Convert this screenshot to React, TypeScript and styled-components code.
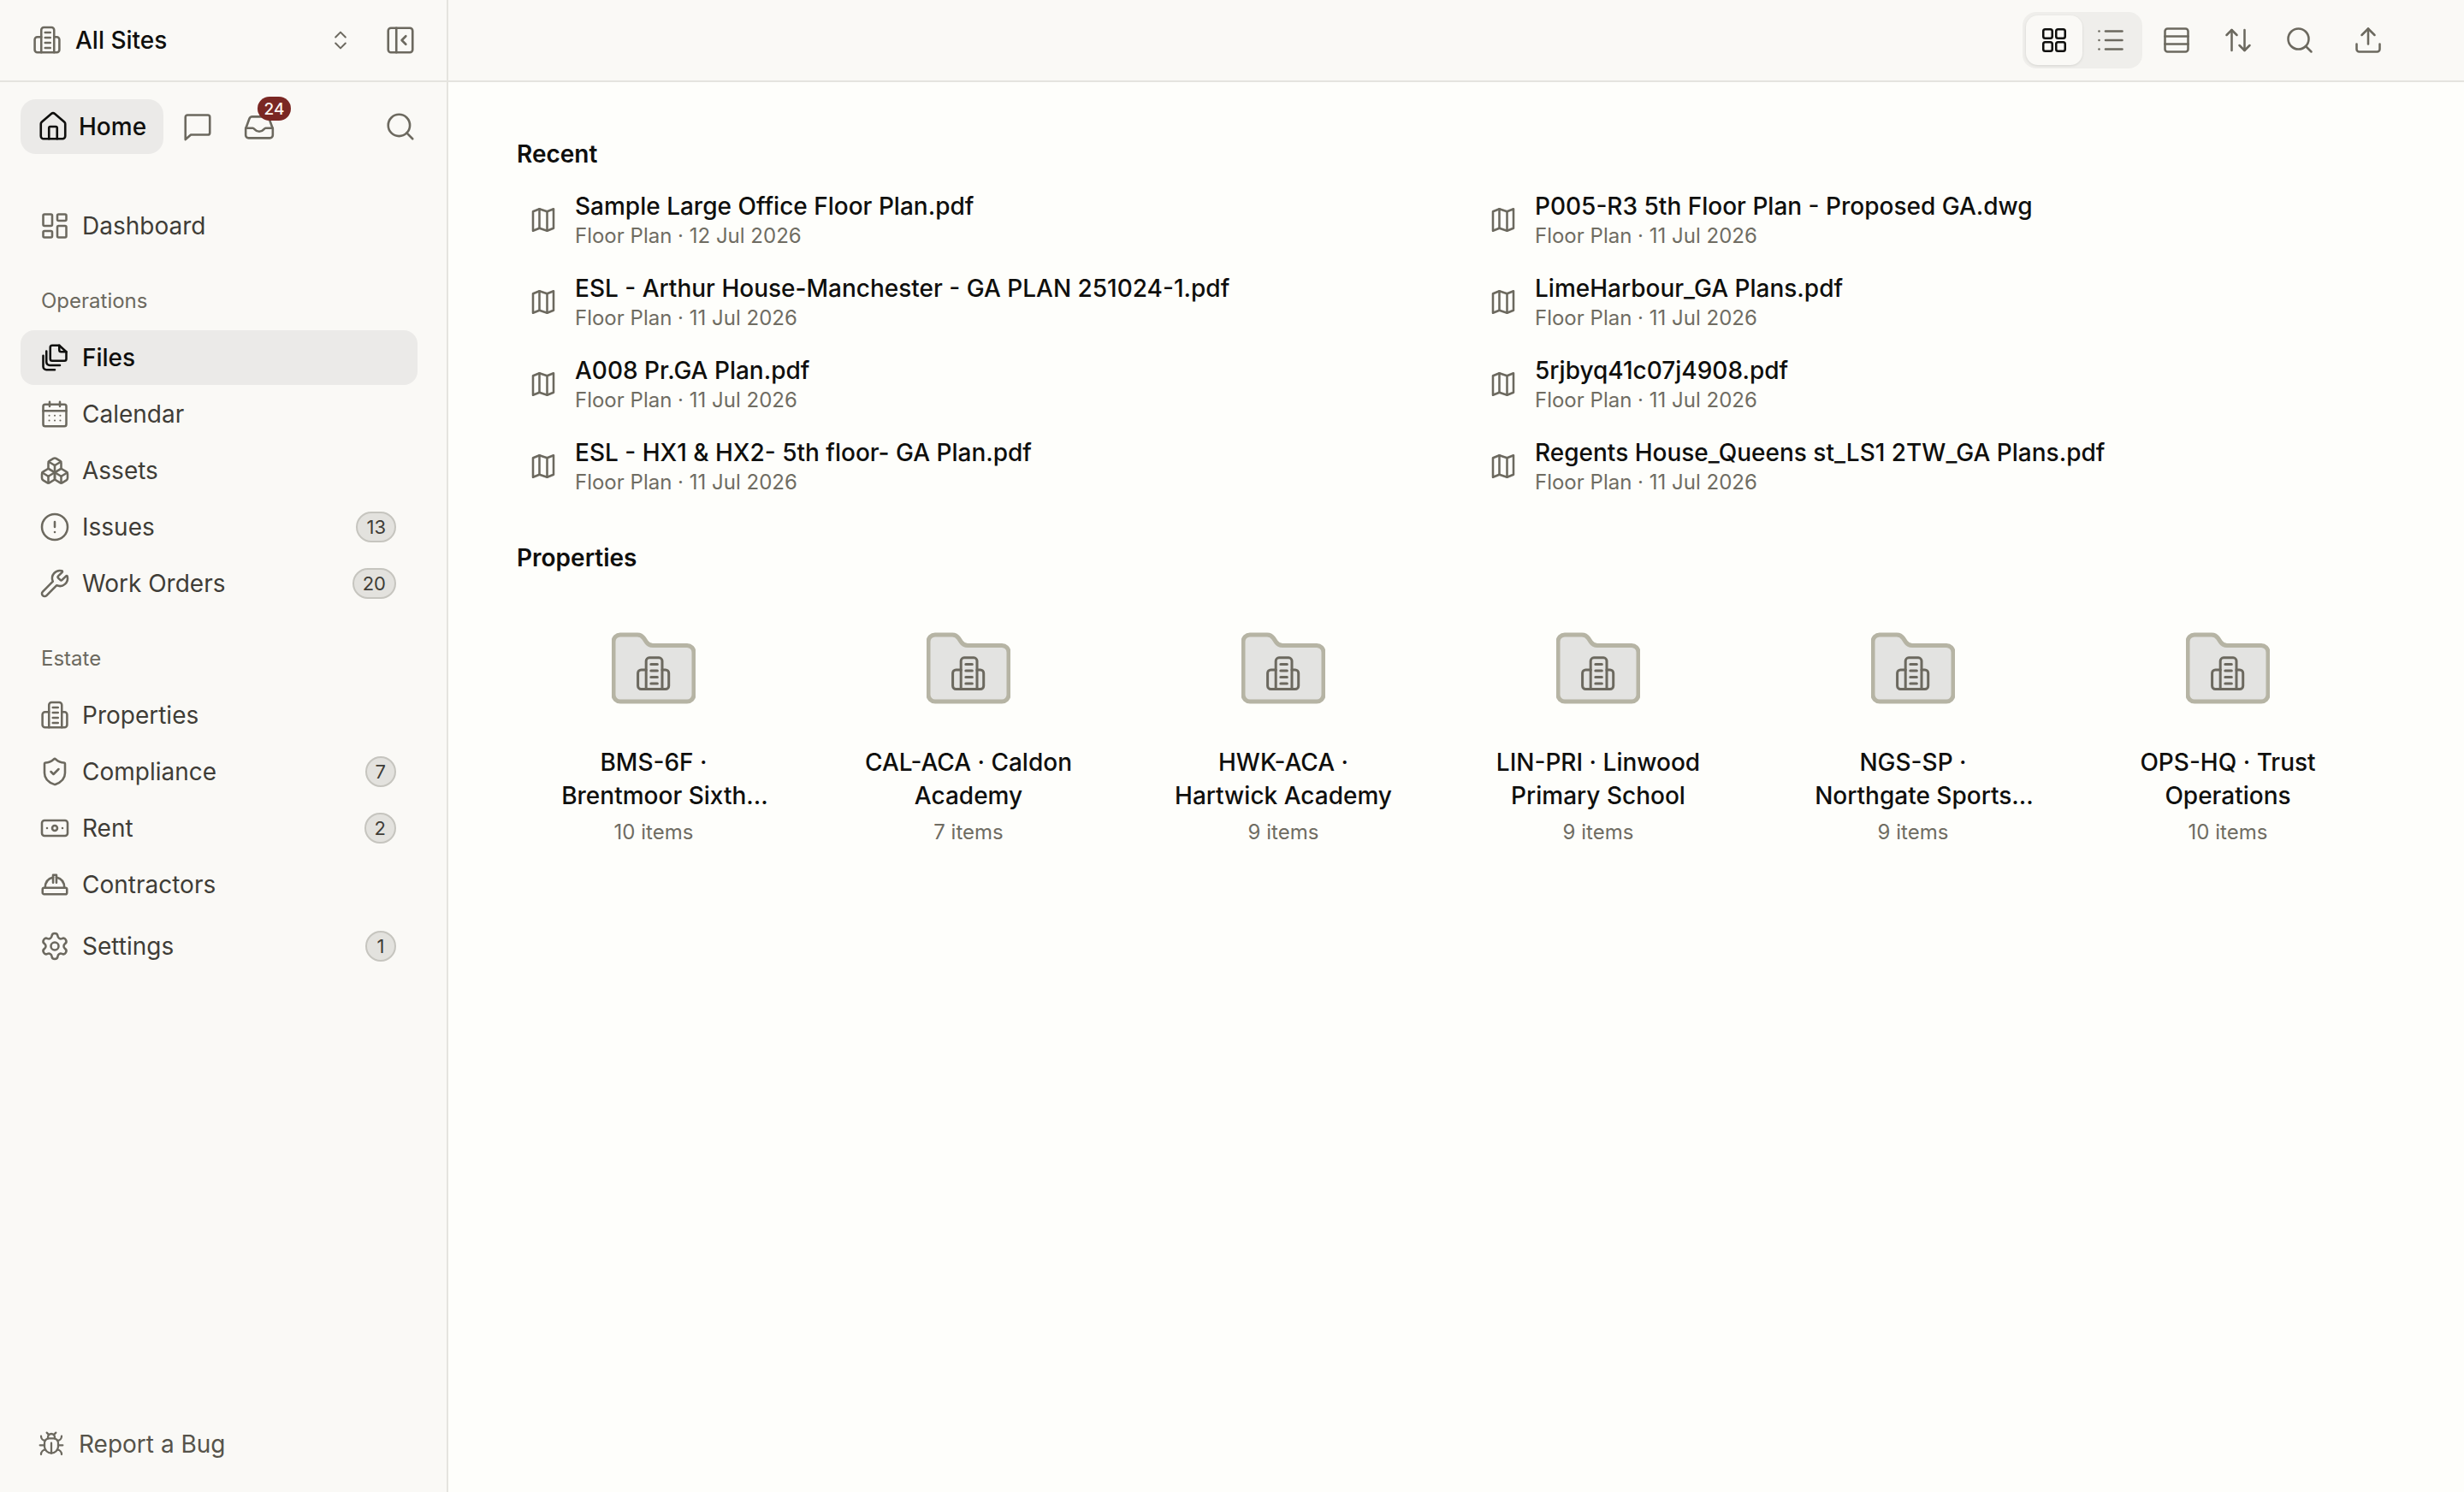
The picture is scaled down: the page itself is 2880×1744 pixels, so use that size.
import React from 'react';
import styled, { createGlobalStyle } from 'styled-components';
import {
  ArrowUpDown,
  Banknote,
  Boxes,
  Bug,
  ChevronsUpDown,
  CircleAlert,
  House,
  LayoutDashboard,
  List,
  PanelLeftClose,
  Rows3,
  Search,
  Settings,
  ShieldCheck,
  Upload,
  Wrench,
} from 'lucide-react';

const GlobalStyle = createGlobalStyle`
  html, body {
    margin: 0;
    height: 100%;
    background: #fefefb;
  }
  body {
    font-family: Inter, "Liberation Sans", sans-serif;
    color: #0f0f0d;
    overflow: hidden;
  }
  #root { height: 100%; }
`;

// Drawn icons
type GlyphProps = { size?: number; strokeWidth?: number; color?: string };

const Glyph: React.FC<GlyphProps & { children: React.ReactNode }> = ({
  size = 36,
  strokeWidth = 1.7,
  color = 'currentColor',
  children,
}) => (
  <svg
    width={size}
    height={size}
    viewBox="0 0 24 24"
    fill="none"
    stroke={color}
    strokeWidth={strokeWidth}
    strokeLinecap="round"
    strokeLinejoin="round"
  >
    {children}
  </svg>
);

const BuildingPaths: React.FC = () => (
  <>
    <path d="M7.500 21.500V4a2 2 0 0 1 2-2h6a2 2 0 0 1 2 2v17.500" />
    <path d="M7.500 9.500H4.400a2 2 0 0 0-2 2v8a2 2 0 0 0 2 2h15.200a2 2 0 0 0 2-2v-8a2 2 0 0 0-2-2h-2.100" />
    <path d="M10.500 6h4M10.500 10h4M10.500 14h4M10.500 18h4" />
  </>
);

const BuildingIcon: React.FC<GlyphProps> = (p) => (
  <Glyph {...p}>
    <BuildingPaths />
  </Glyph>
);

const MessageIcon: React.FC<GlyphProps> = (p) => (
  <Glyph {...p}>
    <path d="M3 21.500V5a1.500 1.500 0 0 1 1.500-1.500h15A1.500 1.500 0 0 1 21 5v11.500a1.500 1.500 0 0 1-1.500 1.500H7z" />
  </Glyph>
);

const InboxIcon: React.FC<GlyphProps> = (p) => (
  <Glyph {...p}>
    <path d="M2.500 13.500 5 6.600A2.400 2.400 0 0 1 7.200 5h9.600A2.400 2.400 0 0 1 19 6.600l2.500 6.900V18a2 2 0 0 1-2 2h-15a2 2 0 0 1-2-2z" />
    <path d="M2.500 13h5c1.300 0 1.400 2.400 4.500 2.400s3.200-2.400 4.500-2.400h5" />
  </Glyph>
);

const FilesIcon: React.FC<GlyphProps> = (p) => (
  <Glyph {...p}>
    <path d="M10 14.500a1.500 1.500 0 0 1-1.500-1.500V4a1.500 1.500 0 0 1 1.500-1.500h5.500L21 7.500V13a1.500 1.500 0 0 1-1.500 1.500z" />
    <path d="M15.500 2.500V6a1.500 1.500 0 0 0 1.500 1.500h4" />
    <path d="M5.500 7v8.500A2.500 2.500 0 0 0 8 18h8" />
    <path d="M3 10.500V19a2.500 2.500 0 0 0 2.500 2.500H12" />
  </Glyph>
);

const CalendarIcon: React.FC<GlyphProps> = (p) => (
  <Glyph {...p}>
    <rect x="3" y="4.500" width="18" height="17" rx="1.500" />
    <path d="M3 9.500h18M8 2.500v3.500M16 2.500v3.500" />
    <path d="M7.700 13.200h.01M12 13.200h.01M16.300 13.200h.01M7.700 17h.01M12 17h.01M16.300 17h.01" strokeWidth="1.400" />
  </Glyph>
);

const HardHatIcon: React.FC<GlyphProps> = (p) => (
  <Glyph {...p}>
    <rect x="2.500" y="14.500" width="19" height="5" rx="1.200" />
    <path d="M4.500 14.500c0-4.300 2.300-7.300 6.200-8.200M19.500 14.500c0-4.300-2.300-7.300-6.200-8.200" />
    <path d="M10.700 10.500V4.500h2.600v6" />
  </Glyph>
);

const GridIcon: React.FC<GlyphProps> = (p) => (
  <Glyph {...p}>
    <rect x="3.500" y="3.500" width="7" height="7" rx="1.500" />
    <rect x="13.500" y="3.500" width="7" height="7" rx="1.500" />
    <rect x="3.500" y="13.500" width="7" height="7" rx="1.500" />
    <rect x="13.500" y="13.500" width="7" height="7" rx="1.500" />
  </Glyph>
);

const PlanIcon: React.FC<GlyphProps> = (p) => (
  <Glyph {...p}>
    <path d="M4 5.500 9 3.500l6 2 5-2v15l-5 2-6-2-5 2z" />
    <path d="M9 3.500v15M15 5.500v15" />
  </Glyph>
);

const FolderGlyph: React.FC = () => (
  <FolderSvg viewBox="0 0 98 84">
    <path
      d="M10 3h20a9 9 0 0 1 7.500 4l3 4.500a9 9 0 0 0 7.500 4h40a8 8 0 0 1 8 8V73a8 8 0 0 1-8 8H10a8 8 0 0 1-8-8V11a8 8 0 0 1 8-8z"
      fill="#e3e3e1"
      stroke="#b6b4a4"
      strokeWidth="5"
    />
    <g transform="translate(26.100 26.100) scale(1.880)" fill="none" stroke="#6c695f" strokeWidth="1.600" strokeLinecap="round" strokeLinejoin="round">
      <BuildingPaths />
    </g>
  </FolderSvg>
);

// Layout
const Shell = styled.div`
  display: grid;
  grid-template-columns: 524px 1fr;
  height: 100%;
`;

const Sidebar = styled.aside`
  display: flex;
  flex-direction: column;
  background: #faf9f6;
  border-right: 2px solid #e5e4df;
  min-height: 0;
`;

const SiteBar = styled.div`
  display: flex;
  align-items: center;
  height: 94px;
  flex: none;
  padding: 0 35px 0 37px;
  border-bottom: 2px solid #e5e4df;
  color: #6c695f;
`;

const SiteName = styled.span`
  flex: 1;
  margin-left: 15px;
  font-size: 28px;
  font-weight: 500;
  color: #0f0f0d;
`;

const SiteActions = styled.div`
  display: flex;
  align-items: center;
  gap: 37px;
`;

const QuickRow = styled.div`
  display: flex;
  align-items: center;
  height: 64px;
  margin: 20px 35px 0 24px;
  color: #6c695f;
`;

const HomePill = styled.div`
  display: flex;
  align-items: center;
  gap: 11px;
  width: 167px;
  height: 64px;
  box-sizing: border-box;
  padding-left: 19px;
  border-radius: 18px;
  background: #ebeae8;
  color: #0f0f0d;
  font-size: 28px;
  font-weight: 500;
`;

const QuickIcon = styled.div<{ $gap: number }>`
  position: relative;
  display: flex;
  margin-left: ${(p) => p.$gap}px;
`;

const InboxCount = styled.span`
  position: absolute;
  top: -15px;
  right: -17px;
  display: flex;
  align-items: center;
  justify-content: center;
  width: 39px;
  height: 28px;
  border-radius: 14px;
  background: #7a2723;
  color: #fdf6f2;
  font-size: 19px;
  font-weight: 500;
`;

const Spacer = styled.div`
  flex: 1;
`;

const Nav = styled.nav`
  display: flex;
  flex-direction: column;
  gap: 2px;
  flex: 1;
  margin-top: 52px;
  padding: 0 34px 0 24px;
`;

const NavRow = styled.div<{ $active?: boolean; $gapBefore?: boolean }>`
  display: flex;
  align-items: center;
  flex: none;
  gap: 14px;
  height: 64px;
  margin-top: ${(p) => (p.$gapBefore ? '6px' : '0')};
  padding: 0 25px 0 22px;
  border-radius: 16px;
  background: ${(p) => (p.$active ? '#ebeae8' : 'transparent')};
  color: ${(p) => (p.$active ? '#0f0f0d' : '#3f3d37')};
  font-size: 28px;
  font-weight: ${(p) => (p.$active ? 500 : 400)};

  svg {
    flex: none;
    color: ${(p) => (p.$active ? '#0f0f0d' : '#6c695f')};
  }
`;

const NavText = styled.span`
  flex: 1;
`;

const NavGroup = styled.div`
  height: 36px;
  margin: 36px 0 14px;
  padding-left: 24px;
  color: #6c695f;
  font-size: 24px;
  line-height: 36px;
`;

const Count = styled.span`
  display: flex;
  align-items: center;
  justify-content: center;
  box-sizing: border-box;
  min-width: 36px;
  height: 36px;
  padding: 0 10px;
  border: 2px solid #c6c5bf;
  border-radius: 18px;
  background: #e3e2de;
  color: #3f3d37;
  font-size: 22px;
`;

const BugRow = styled.div`
  display: flex;
  align-items: center;
  flex: none;
  gap: 16px;
  height: 64px;
  margin: 0 0 24px 44px;
  color: #56534a;
  font-size: 28px;
`;

const Main = styled.main`
  display: flex;
  flex-direction: column;
  min-width: 0;
`;

const TopBar = styled.div`
  display: flex;
  align-items: center;
  justify-content: flex-end;
  height: 94px;
  flex: none;
  padding-right: 94px;
  background: #faf9f6;
  border-bottom: 2px solid #e5e4df;
  color: #6c695f;
`;

const Toggle = styled.div`
  display: flex;
  padding: 4px;
  border-radius: 16px;
  background: #efeeeb;
`;

const ToggleOption = styled.div<{ $on?: boolean }>`
  display: flex;
  align-items: center;
  justify-content: center;
  width: 66px;
  height: 58px;
  border-radius: 14px;
  background: ${(p) => (p.$on ? '#faf9f6' : 'transparent')};
  box-shadow: ${(p) => (p.$on ? '0 1px 3px rgba(40, 38, 30, 0.12)' : 'none')};
  color: ${(p) => (p.$on ? '#0f0f0d' : '#6c695f')};
`;

const TopAction = styled.div<{ $gap: number }>`
  display: flex;
  justify-content: center;
  width: 36px;
  margin-left: ${(p) => p.$gap}px;
`;

const Content = styled.div`
  flex: 1;
  padding: 64px 80px 0;
`;

const Heading = styled.h2<{ $spaced?: boolean }>`
  margin: ${(p) => (p.$spaced ? '39px' : '0')} 0 0;
  font-size: 28px;
  font-weight: 600;
  line-height: 40px;
`;

const RecentGrid = styled.div`
  display: grid;
  grid-template-columns: 1fr 1fr;
  column-gap: 48px;
  margin-top: 9px;
`;

const RecentRow = styled.div`
  display: flex;
  align-items: center;
  gap: 19px;
  height: 96px;
  padding-left: 13px;
  color: #6c695f;
`;

const RecentText = styled.div`
  display: flex;
  flex-direction: column;
  gap: 1px;
`;

const RecentTitle = styled.span`
  color: #0f0f0d;
  font-size: 28px;
  font-weight: 500;
  line-height: 36px;
`;

const RecentMeta = styled.span`
  color: #6f6c62;
  font-size: 24px;
  line-height: 32px;
`;

const PropertyGrid = styled.div`
  display: grid;
  grid-template-columns: repeat(6, 320px);
  column-gap: 48px;
  margin-top: 67px;
`;

const PropertyCard = styled.div`
  display: flex;
  flex-direction: column;
  align-items: center;
  text-align: center;
`;

const FolderSvg = styled.svg`
  display: block;
  width: 98px;
  height: 84px;
`;

const PropertyTitle = styled.div`
  width: 260px;
  margin-top: 49px;
  font-size: 28px;
  font-weight: 500;
  line-height: 39px;
`;

// a clamped last line sits a little right of centre
const ClampedLine = styled.span`
  display: block;
  margin: 0 -30px;
  padding-left: 26px;
  white-space: nowrap;
`;

const PropertyItems = styled.div`
  margin-top: 7px;
  color: #6f6c62;
  font-size: 24px;
  line-height: 32px;
`;

// Data
const ICON = { size: 36, strokeWidth: 1.7 };
const ICON_LG = { size: 38, strokeWidth: 1.65 };

type NavEntry = { label: string; icon: React.ReactNode; count?: number; active?: boolean };

const operations: NavEntry[] = [
  { label: 'Files', icon: <FilesIcon />, active: true },
  { label: 'Calendar', icon: <CalendarIcon /> },
  { label: 'Assets', icon: <Boxes {...ICON} /> },
  { label: 'Issues', icon: <CircleAlert {...ICON} />, count: 13 },
  { label: 'Work Orders', icon: <Wrench {...ICON} />, count: 20 },
];

const estate: NavEntry[] = [
  { label: 'Properties', icon: <BuildingIcon /> },
  { label: 'Compliance', icon: <ShieldCheck {...ICON} />, count: 7 },
  { label: 'Rent', icon: <Banknote {...ICON} />, count: 2 },
  { label: 'Contractors', icon: <HardHatIcon /> },
];

const recent = [
  ['Sample Large Office Floor Plan.pdf', '12 Jul 2026'],
  ['P005-R3 5th Floor Plan - Proposed GA.dwg', '11 Jul 2026'],
  ['ESL - Arthur House-Manchester - GA PLAN 251024-1.pdf', '11 Jul 2026'],
  ['LimeHarbour_GA Plans.pdf', '11 Jul 2026'],
  ['A008 Pr.GA Plan.pdf', '11 Jul 2026'],
  ['5rjbyq41c07j4908.pdf', '11 Jul 2026'],
  ['ESL - HX1 & HX2- 5th floor- GA Plan.pdf', '11 Jul 2026'],
  ['Regents House_Queens st_LS1 2TW_GA Plans.pdf', '11 Jul 2026'],
];

type Property = { name: string; clamped?: string; items: number };

const properties: Property[] = [
  { name: 'BMS-6F ·', clamped: 'Brentmoor Sixth...', items: 10 },
  { name: 'CAL-ACA · Caldon Academy', items: 7 },
  { name: 'HWK-ACA · Hartwick Academy', items: 9 },
  { name: 'LIN-PRI · Linwood Primary School', items: 9 },
  { name: 'NGS-SP ·', clamped: 'Northgate Sports...', items: 9 },
  { name: 'OPS-HQ · Trust Operations', items: 10 },
];

const renderNav = (entries: NavEntry[]) =>
  entries.map((e) => (
    <NavRow key={e.label} $active={e.active}>
      {e.icon}
      <NavText>{e.label}</NavText>
      {e.count !== undefined && <Count>{e.count}</Count>}
    </NavRow>
  ));

const App: React.FC = () => {
  return (
    <Shell>
      <GlobalStyle />
      <Sidebar>
        <SiteBar>
          <BuildingIcon />
          <SiteName>All Sites</SiteName>
          <SiteActions>
            <ChevronsUpDown size={28} strokeWidth={1.7} />
            <PanelLeftClose {...ICON_LG} />
          </SiteActions>
        </SiteBar>
        <QuickRow>
          <HomePill>
            <House {...ICON_LG} />
            Home
          </HomePill>
          <QuickIcon $gap={21}>
            <MessageIcon size={38} strokeWidth={1.65} />
          </QuickIcon>
          <QuickIcon $gap={33}>
            <InboxIcon size={40} strokeWidth={1.55} />
            <InboxCount>24</InboxCount>
          </QuickIcon>
          <Spacer />
          <Search {...ICON_LG} />
        </QuickRow>
        <Nav>
          <NavRow>
            <LayoutDashboard {...ICON} />
            <NavText>Dashboard</NavText>
          </NavRow>
          <NavGroup>Operations</NavGroup>
          {renderNav(operations)}
          <NavGroup>Estate</NavGroup>
          {renderNav(estate)}
          <NavRow $gapBefore>
            <Settings {...ICON} />
            <NavText>Settings</NavText>
            <Count>1</Count>
          </NavRow>
          <Spacer />
        </Nav>
        <BugRow>
          <Bug size={32} strokeWidth={1.7} color="#6c695f" />
          Report a Bug
        </BugRow>
      </Sidebar>
      <Main>
        <TopBar>
          <Toggle>
            <ToggleOption $on>
              <GridIcon />
            </ToggleOption>
            <ToggleOption>
              <List {...ICON} />
            </ToggleOption>
          </Toggle>
          <TopAction $gap={22}>
            <Rows3 {...ICON} />
          </TopAction>
          <TopAction $gap={36}>
            <ArrowUpDown {...ICON} />
          </TopAction>
          <TopAction $gap={36}>
            <Search {...ICON} />
          </TopAction>
          <TopAction $gap={44}>
            <Upload {...ICON} />
          </TopAction>
        </TopBar>
        <Content>
          <Heading>Recent</Heading>
          <RecentGrid>
            {recent.map(([title, date]) => (
              <RecentRow key={title}>
                <PlanIcon />
                <RecentText>
                  <RecentTitle>{title}</RecentTitle>
                  <RecentMeta>Floor Plan · {date}</RecentMeta>
                </RecentText>
              </RecentRow>
            ))}
          </RecentGrid>
          <Heading $spaced>Properties</Heading>
          <PropertyGrid>
            {properties.map((p) => (
              <PropertyCard key={p.name}>
                <FolderGlyph />
                <PropertyTitle>
                  {p.name}
                  {p.clamped && <ClampedLine>{p.clamped}</ClampedLine>}
                </PropertyTitle>
                <PropertyItems>{p.items} items</PropertyItems>
              </PropertyCard>
            ))}
          </PropertyGrid>
        </Content>
      </Main>
    </Shell>
  );
};

export default App;
